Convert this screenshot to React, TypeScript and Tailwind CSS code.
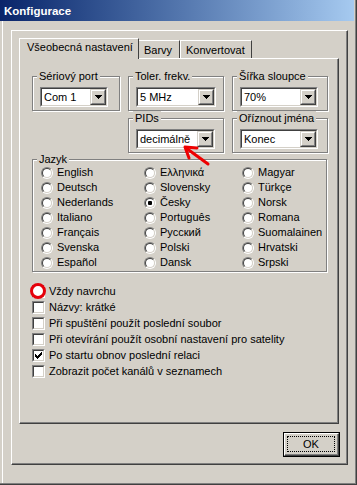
import React from "react";

const Arrow = () => (
  <svg width="7" height="4" viewBox="0 0 7 4" shapeRendering="crispEdges">
    <path d="M0 0h7v1H0zM1 1h5v1H1zM2 2h3v1H2zM3 3h1v1H3z" fill="#000" />
  </svg>
);

const Combo = ({ value, w }: { value: string; w: string }) => (
  <div className={`${w} h-[20px] flex border border-t-[#808080] border-l-[#808080] border-r-white border-b-white`}>
    <div className="flex-1 flex min-w-0 border border-t-[#404040] border-l-[#404040] border-r-[#D4D0C8] border-b-[#D4D0C8] bg-white">
      <div className="flex-1 pl-[2px] leading-[16px] whitespace-nowrap overflow-hidden">{value}</div>
      <div className="w-[16px] h-[16px] border border-t-[#D4D0C8] border-l-[#D4D0C8] border-r-[#404040] border-b-[#404040] bg-[#D4D0C8]">
        <div className="w-full h-full border border-t-white border-l-white border-r-[#808080] border-b-[#808080] flex items-center justify-center">
          <Arrow />
        </div>
      </div>
    </div>
  </div>
);

const Group = ({
  label,
  className,
  children,
}: {
  label: string;
  className: string;
  children?: React.ReactNode;
}) => (
  <div className={`relative border border-[#808080] shadow-[inset_1px_1px_0_#fff,1px_1px_0_#fff] ${className}`}>
    <span className="absolute left-[4px] top-[-8px] px-[2px] bg-[#D4D0C8] leading-[14px] whitespace-nowrap">
      {label}
    </span>
    {children}
  </div>
);

const Radio = ({ label, checked }: { label: string; checked?: boolean }) => (
  <div className="flex items-center h-[15px] gap-[4px] whitespace-nowrap">
    <div className="w-[12px] h-[12px] rounded-full border border-t-[#808080] border-l-[#808080] border-r-white border-b-white shrink-0">
      <div className="w-full h-full rounded-full border border-t-[#404040] border-l-[#404040] border-r-[#D4D0C8] border-b-[#D4D0C8] bg-white flex items-center justify-center">
        {checked && <div className="w-[4px] h-[4px] rounded-[1px] bg-black" />}
      </div>
    </div>
    <span className="leading-[13px]">{label}</span>
  </div>
);

const CheckMark = () => (
  <svg width="7" height="7" viewBox="0 0 7 7" shapeRendering="crispEdges">
    {[2, 3, 4, 3, 2, 1, 0].map((y, x) => (
      <rect key={x} x={x} y={y} width="1" height="3" fill="#000" />
    ))}
  </svg>
);

const Check = ({
  label,
  checked,
  ring,
}: {
  label: string;
  checked?: boolean;
  ring?: boolean;
}) => (
  <div className="flex items-center h-[16px] gap-[4px] whitespace-nowrap">
    <div className="relative w-[13px] h-[13px] shrink-0 border border-t-[#808080] border-l-[#808080] border-r-white border-b-white">
      <div className="w-full h-full border border-t-[#404040] border-l-[#404040] border-r-[#D4D0C8] border-b-[#D4D0C8] bg-white flex items-center justify-center">
        {checked && <CheckMark />}
      </div>
      {ring && (
        <div className="absolute left-[-3px] top-[-3px] w-[16px] h-[16px] rounded-full border-[3px] border-[#E5000A] bg-white" />
      )}
    </div>
    <span className="leading-[13px]">{label}</span>
  </div>
);

const col1 = ["English", "Deutsch", "Nederlands", "Italiano", "Français", "Svenska", "Español"];
const col2 = ["Ελληνικά", "Slovensky", "Česky", "Português", "Русский", "Polski", "Dansk"];
const col3 = ["Magyar", "Türkçe", "Norsk", "Romana", "Suomalainen", "Hrvatski", "Srpski"];

export default function App() {
  return (
    <div className="relative w-[357px] h-[485px] bg-[#D4D0C8] text-[11px] text-black font-['Liberation_Sans',Arial,sans-serif] border-r border-b border-r-[#404040] border-b-[#404040] overflow-hidden">
      <div className="w-full h-full flex flex-col border-r border-b border-r-[#808080] border-b-[#808080]">
        {/* Title bar */}
        <div className="h-[21px] shrink-0 mr-[1px] bg-linear-to-r from-[#0A246A] to-[#A6CAF0] flex items-center pl-[4px]">
          <span className="text-white font-bold text-[11.5px] leading-[14px]">Konfigurace</span>
        </div>
        {/* Body */}
        <div className="flex-1 ml-[2px] border-l border-l-white pl-[8px] pt-[9px]">
          {/* Outer panel */}
          <div className="w-[337px] h-[435px] border border-t-white border-l-white border-r-[#404040] border-b-[#404040]">
            <div className="w-full h-full border-r border-b border-r-[#808080] border-b-[#808080] pl-[7px] pt-[7px] flex flex-col">
              {/* Tabs */}
              <div className="flex items-end h-[20px]">
                <div className="relative z-10 w-[120px] h-[21px] -mb-[1px] bg-[#D4D0C8] border-t border-l border-t-white border-l-white border-r border-r-[#404040] pl-[7px] pt-[2px] leading-[13px] whitespace-nowrap">
                  Všeobecná nastavení
                </div>
                <div className="w-[41px] h-[18px] border-t border-t-white border-r border-r-[#404040] pl-[5px] pt-[3px] leading-[13px]">
                  Barvy
                </div>
                <div className="w-[72px] h-[18px] border-t border-l border-t-white border-l-white border-r border-r-[#404040] pl-[5px] pt-[3px] leading-[13px]">
                  Konvertovat
                </div>
              </div>
              {/* Tab panel */}
              <div className="w-[320px] h-[366px] border border-t-white border-l-white border-r-[#404040] border-b-[#404040]">
                <div className="w-full h-full border-r border-b border-r-[#808080] border-b-[#808080] pl-[12px] pt-[17px] flex flex-col">
                  <div className="flex gap-[8px]">
                    <Group label="Sériový port" className="w-[88px] h-[35px] pl-[7px] pt-[10px]">
                      <Combo value="Com 1" w="w-[68px]" />
                    </Group>
                    <Group label="Toler. frekv." className="w-[96px] h-[35px] pl-[7px] pt-[10px]">
                      <Combo value="5 MHz" w="w-[80px]" />
                    </Group>
                    <Group label="Šířka sloupce" className="w-[96px] h-[35px] pl-[7px] pt-[10px]">
                      <Combo value="70%" w="w-[78px]" />
                    </Group>
                  </div>
                  <div className="flex gap-[8px] ml-[96px] mt-[7px]">
                    <Group label="PIDs" className="w-[96px] h-[35px] pl-[7px] pt-[10px]">
                      <Combo value="decimálně" w="w-[79px]" />
                    </Group>
                    <Group label="Oříznout jména" className="w-[96px] h-[35px] pl-[7px] pt-[10px]">
                      <Combo value="Konec" w="w-[78px]" />
                    </Group>
                  </div>
                  <Group label="Jazyk" className="w-[295px] h-[113px] mt-[6px] pl-[8px] pt-[5px]">
                    <div className="grid grid-cols-[103px_98px_1fr]">
                      {col1.map((_, i) => (
                        <React.Fragment key={i}>
                          <Radio label={col1[i]} />
                          <Radio label={col2[i]} checked={col2[i] === "Česky"} />
                          <Radio label={col3[i]} />
                        </React.Fragment>
                      ))}
                    </div>
                  </Group>
                  <div className="mt-[11px] flex flex-col">
                    <Check label="Vždy navrchu" ring />
                    <Check label="Názvy: krátké" />
                    <Check label="Při spuštění použít poslední soubor" />
                    <Check label="Při otevírání použít osobní nastavení pro satelity" />
                    <Check label="Po startu obnov poslední relaci" checked />
                    <Check label="Zobrazit počet kanálů v seznamech" />
                  </div>
                </div>
              </div>
              {/* Buttons */}
              <div className="w-[321px] flex justify-end mt-[8px]">
                <div className="w-[57px] h-[25px] border border-black">
                  <div className="w-full h-full border border-t-white border-l-white border-r-[#404040] border-b-[#404040]">
                    <div className="w-full h-full border-r border-b border-r-[#808080] border-b-[#808080] p-[2px]">
                      <div className="w-full h-full border border-dotted border-black flex items-center justify-center leading-[13px]">
                        OK
                      </div>
                    </div>
                  </div>
                </div>
              </div>
            </div>
          </div>
        </div>
      </div>
      {/* Red annotation arrow */}
      <svg
        className="absolute left-0 top-0 pointer-events-none"
        width="357"
        height="485"
        viewBox="0 0 357 485"
      >
        <g stroke="#EE0000" strokeWidth="3" strokeLinecap="round" strokeLinejoin="round" fill="none">
          <path d="M208 164 L186 148" />
          <path d="M197 148 L185 147 L189 158" />
        </g>
      </svg>
    </div>
  );
}
